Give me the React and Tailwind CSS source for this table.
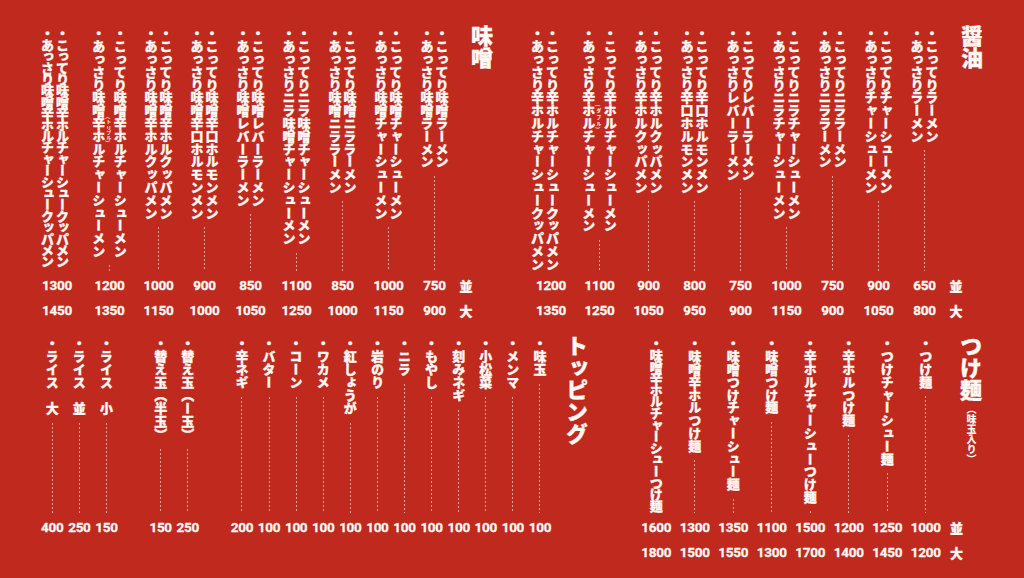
const shoyu = [
  { a: "こってりラーメン", b: "あっさりラーメン", p: ["650", "800"] },
  { a: "こってりチャーシューメン", b: "あっさりチャーシューメン", p: ["900", "1050"] },
  { a: "こってりニララーメン", b: "あっさりニララーメン", p: ["750", "900"] },
  { a: "こってりニラチャーシューメン", b: "あっさりニラチャーシューメン", p: ["1000", "1150"] },
  { a: "こってりレバーラーメン", b: "あっさりレバーラーメン", p: ["750", "900"] },
  { a: "こってり辛口ホルモンメン", b: "あっさり辛口ホルモンメン", p: ["800", "950"] },
  { a: "こってり辛ホルクッパメン", b: "あっさり辛ホルクッパメン", p: ["900", "1050"] },
  {
    a: "こってり辛ホルチャーシューメン",
    b: "あっさり辛ホルチャーシューメン",
    ruby: { base: "ホル", rt: "(ダブル)" },
    p: ["1100", "1250"],
    w: "w-[52px]",
  },
  {
    a: "こってり辛ホルチャーシュークッパメン",
    b: "あっさり辛ホルチャーシュークッパメン",
    p: ["1200", "1350"],
    w: "w-[57px]",
    pr: "pl-3",
  },
];

const miso = [
  { a: "こってり味噌ラーメン", b: "あっさり味噌ラーメン", p: ["750", "900"] },
  { a: "こってり味噌チャーシューメン", b: "あっさり味噌チャーシューメン", p: ["1000", "1150"] },
  { a: "こってり味噌ニララーメン", b: "あっさり味噌ニララーメン", p: ["850", "1000"] },
  { a: "こってりニラ味噌チャーシューメン", b: "あっさりニラ味噌チャーシューメン", p: ["1100", "1250"] },
  { a: "こってり味噌レバーラーメン", b: "あっさり味噌レバーラーメン", p: ["850", "1050"] },
  { a: "こってり味噌辛口ホルモンメン", b: "あっさり味噌辛口ホルモンメン", p: ["900", "1000"] },
  { a: "こってり味噌辛ホルクッパメン", b: "あっさり味噌辛ホルクッパメン", p: ["1000", "1150"] },
  {
    a: "こってり味噌辛ホルチャーシューメン",
    b: "あっさり味噌辛ホルチャーシューメン",
    ruby: { base: "辛ホ", rt: "(トリプル)" },
    p: ["1200", "1350"],
    w: "w-[52px]",
  },
  {
    a: "こってり味噌辛ホルチャーシュークッパメン",
    b: "あっさり味噌辛ホルチャーシュークッパメン",
    p: ["1300", "1450"],
    w: "w-[57px]",
    pr: "pl-1",
    t: "tracking-[-1.6px]",
  },
];

const tsukemen = [
  { name: "つけ麺", p: ["1000", "1200"] },
  { name: "つけチャーシュー麺", p: ["1250", "1450"] },
  { name: "辛ホルつけ麺", p: ["1200", "1400"] },
  { name: "辛ホルチャーシューつけ麺", p: ["1500", "1700"] },
  { name: "味噌つけ麺", p: ["1100", "1300"] },
  { name: "味噌つけチャーシュー麺", p: ["1350", "1550"] },
  { name: "味噌辛ホルつけ麺", p: ["1300", "1500"] },
  { name: "味噌辛ホルチャーシューつけ麺", p: ["1600", "1800"], t: "tracking-[-1.4px]" },
];

const toppings = [
  { name: "味玉", p: "100" },
  { name: "メンマ", p: "100" },
  { name: "小松菜", p: "100" },
  { name: "刻みネギ", p: "100" },
  { name: "もやし", p: "100" },
  { name: "ニラ", p: "100" },
  { name: "岩のり", p: "100" },
  { name: "紅しょうが", p: "100" },
  { name: "ワカメ", p: "100" },
  { name: "コーン", p: "100" },
  { name: "バター", p: "100" },
  { name: "辛ネギ", p: "200" },
  null,
  { name: "替え玉（ー玉）", p: "250" },
  { name: "替え玉（半玉）", p: "150" },
  null,
  { name: "ライス　小", p: "150" },
  { name: "ライス　並", p: "250" },
  { name: "ライス　大", p: "400" },
];

const num =
  "font-['Liberation_Sans_Narrow','Roboto',sans-serif] font-bold text-[13.5px] tracking-[-0.3px] text-center [-webkit-text-stroke:0.3px_#fff8f4]";
const heavy = "font-black [-webkit-text-stroke:0.3px_#fff8f4]";

function Line({ text, ruby, className = "" }) {
  let body = text;
  if (ruby) {
    const i = text.indexOf(ruby.base);
    body = (
      <>
        {text.slice(0, i)}
        <ruby>
          {ruby.base}
          <rt className="text-[5px] font-bold [-webkit-text-stroke:0]">{ruby.rt}</rt>
        </ruby>
        {text.slice(i + ruby.base.length)}
      </>
    );
  }
  return (
    <div className={"whitespace-nowrap [writing-mode:vertical-rl] " + heavy + " " + className}>・{body}</div>
  );
}

function Dots() {
  return (
    <div className="mt-[8px] mb-[2px] w-px flex-1 bg-[repeating-linear-gradient(to_bottom,#eba59d_0_2px,transparent_2px_4px)]" />
  );
}

function Pair({ item }) {
  const t = item.t || "tracking-[-0.2px]";
  return (
    <div className={"flex shrink-0 flex-col items-center " + (item.w || "w-[46px]")}>
      <div className="flex h-[246px] flex-col items-center">
        <div className="flex flex-row-reverse gap-[2px]">
          <Line text={item.a} className={"text-[13px] leading-[13px] " + t} />
          <Line text={item.b} ruby={item.ruby} className={"text-[13px] leading-[13px] " + t} />
        </div>
        <Dots />
      </div>
      <div className={"h-[25px] leading-[25px] " + num + " " + (item.pr || "")}>{item.p[0]}</div>
      <div className={"h-[25px] leading-[25px] " + num + " " + (item.pr || "")}>{item.p[1]}</div>
    </div>
  );
}

function SizeLabels({ className = "" }) {
  return (
    <>
      <div className={"h-[25px] text-[13px] leading-[25px] " + heavy + " " + className}>並</div>
      <div className={"h-[25px] text-[13px] leading-[25px] " + heavy + " " + className}>大</div>
    </>
  );
}

function Heading({ children, className = "" }) {
  return (
    <div className={"text-[22px] leading-[22px] [writing-mode:vertical-rl] " + heavy + " " + className}>
      {children}
    </div>
  );
}

function RamenBlock({ title, items }) {
  return (
    <div className="flex w-[473.5px] flex-row-reverse">
      <div className="flex w-[42.5px] shrink-0 flex-col">
        <div className="flex h-[246px] justify-end pr-[7px]">
          <Heading className="mt-[-2px] h-fit">{title}</Heading>
        </div>
        <SizeLabels className="pl-[2px]" />
      </div>
      {items.map((item) => (
        <Pair key={item.a} item={item} />
      ))}
    </div>
  );
}

export default function App() {
  return (
    <div className="h-[578px] w-[1024px] overflow-hidden bg-[#c0291e] text-[#fff8f4] font-['Noto_Sans_CJK_JP',sans-serif]">
      <div className="flex flex-row-reverse gap-[16.5px] pr-[34px] pt-[27px]">
        <RamenBlock title="醤油" items={shoyu} />
        <RamenBlock title="味噌" items={miso} />
      </div>

      <div className="mt-[14px] flex flex-row-reverse gap-[47px] pr-[34px]">
        <div className="flex flex-row-reverse">
          <div className="flex w-[45px] shrink-0 flex-col">
            <div className="flex h-[178px] flex-col items-end pr-[8px]">
              <div className="mt-[-2px] flex flex-col items-center">
                <Heading>つけ麺</Heading>
                <div className="mt-[3px] text-[10px] font-black leading-[10px] [writing-mode:vertical-rl]">
                  （味玉入り）
                </div>
              </div>
            </div>
            <SizeLabels className="pl-[5px]" />
          </div>
          {tsukemen.map((item) => (
            <div key={item.name} className="flex w-[38.5px] shrink-0 flex-col items-center">
              <div className="flex h-[178px] flex-col items-center">
                <Line text={item.name} className={"text-[13px] leading-[13px] " + (item.t || "tracking-[-0.2px]")} />
                <Dots />
              </div>
              <div className={"h-[25px] leading-[25px] " + num}>{item.p[0]}</div>
              <div className={"h-[25px] leading-[25px] " + num}>{item.p[1]}</div>
            </div>
          ))}
        </div>

        <div className="flex flex-row-reverse">
          <div className="flex w-[36.5px] shrink-0 justify-end pr-[2px]">
            <Heading className="mt-[-2px] h-fit">トッピング</Heading>
          </div>
          {toppings.map((item, i) =>
            item ? (
              <div key={i} className="flex w-[27.1px] shrink-0 flex-col items-center">
                <div className="flex h-[178px] flex-col items-center">
                  <Line text={item.name} className="text-[13px] leading-[13px]" />
                  <Dots />
                </div>
                <div className={"h-[25px] leading-[25px] " + num}>{item.p}</div>
              </div>
            ) : (
              <div key={i} className="w-[27.1px] shrink-0" />
            )
          )}
        </div>
      </div>
    </div>
  );
}
